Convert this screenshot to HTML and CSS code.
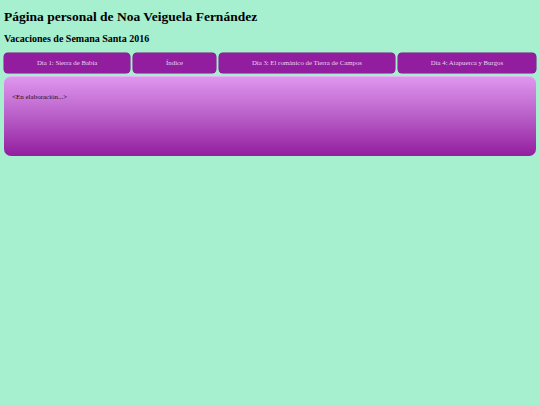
FILE: index.html
```html
<!DOCTYPE html>
<html lang="es">
<head>
<meta charset="utf-8">
<title>Página personal de Noa Veiguela Fernández</title>
<link rel="stylesheet" href="styles.css">
</head>
<body>
<h1 class="title">Página personal de Noa Veiguela Fernández</h1>
<h2 class="subtitle">Vacaciones de Semana Santa 2016</h2>
<nav class="nav">
  <a class="nav-item" href="#">Día 1: Sierra de Babia</a>
  <a class="nav-item" href="#">Índice</a>
  <a class="nav-item" href="#">Día 3: El románico de Tierra de Campos</a>
  <a class="nav-item" href="#">Día 4: Atapuerca y Burgos</a>
</nav>
<main class="content">
  <p class="note">&lt;En elaboración...&gt;</p>
</main>
</body>
</html>
```
FILE: styles.css
```css
html, body {
  margin: 0;
  padding: 0;
}
body {
  background: #a6efcf;
  font-family: "Liberation Serif", "Times New Roman", serif;
  color: #000;
  padding: 4px;
}
.title {
  font-size: 13.5px;
  font-weight: bold;
  margin: 5px 0 0 0;
  line-height: 16px;
}
.subtitle {
  font-size: 10px;
  font-weight: bold;
  margin: 8px 0 0 0;
  line-height: 12px;
}
.nav {
  display: flex;
  gap: 3px;
  margin-top: 8px;
}
.nav-item {
  flex: 1 1 auto;
  background: #931d9f;
  color: #e8d4ee;
  text-decoration: none;
  font-size: 6.8px;
  text-align: center;
  height: 20px;
  line-height: 20px;
  border-radius: 4px;
  box-shadow: 0 0 0 0.5px #7a1585;
}
.content {
  margin-top: 3px;
  height: 80px;
  box-sizing: border-box;
  border-radius: 7px;
  background: linear-gradient(to bottom, #df96ef 0%, #b85ec8 50%, #931d9f 100%);
  border-top: 1px solid #e7b2f3;
  padding: 16px 8px;
}
.note {
  margin: 0;
  font-size: 7px;
  line-height: 8px;
  color: #1a0a1c;
}
```
